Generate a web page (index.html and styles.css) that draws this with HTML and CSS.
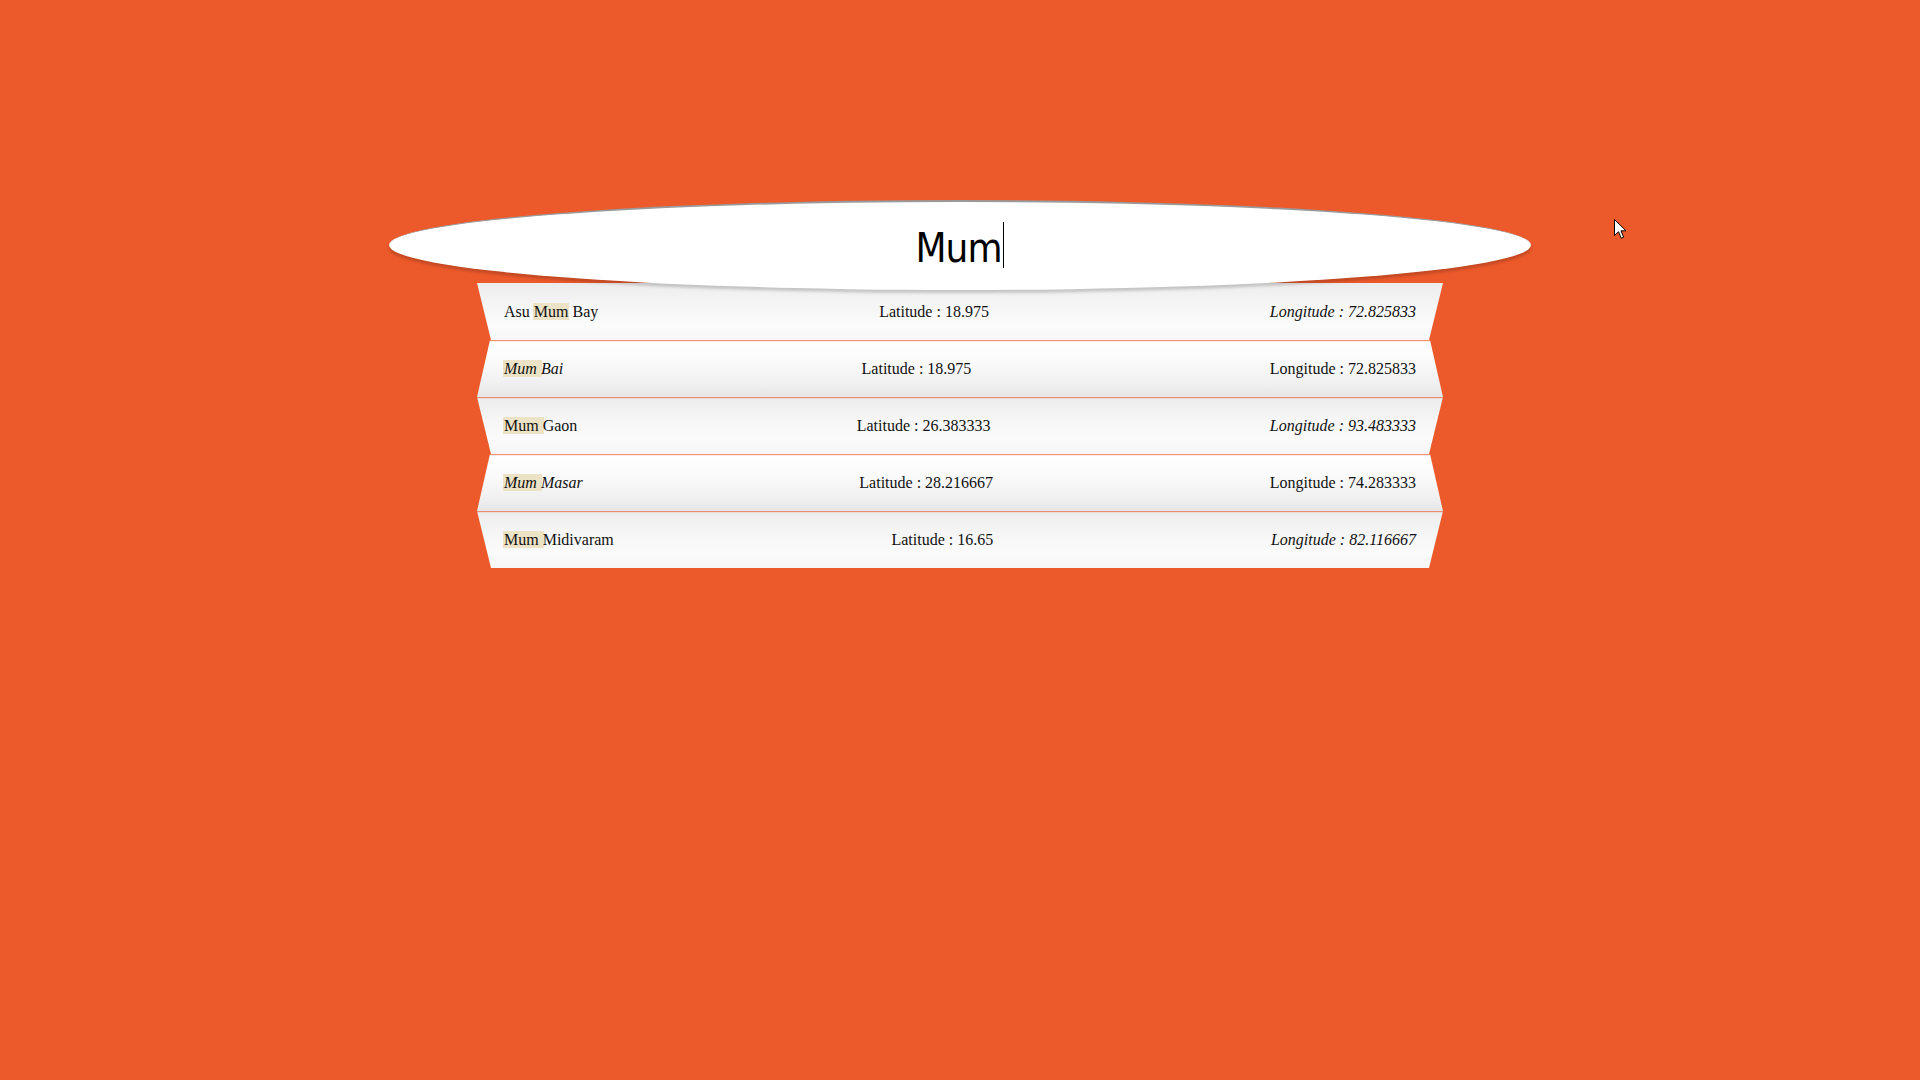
FILE: index.html
```html
<!DOCTYPE html>
<html lang="en">
<head>
<meta charset="utf-8">
<title>Place search</title>
<link rel="stylesheet" href="styles.css">
</head>
<body>
<main class="page">
  <div class="search" role="textbox" aria-label="Search places">
    <span class="search-text">Mum</span><span class="caret"></span>
  </div>
  <ul class="results">
    <li class="row row-odd">
      <span class="name">Asu <mark class="hl">Mum</mark> Bay</span>
      <span class="lat">Latitude : 18.975</span>
      <span class="lng italic">Longitude : 72.825833</span>
    </li>
    <li class="row row-even">
      <span class="name italic"><mark class="hl">Mum </mark>Bai</span>
      <span class="lat">Latitude : 18.975</span>
      <span class="lng">Longitude : 72.825833</span>
    </li>
    <li class="row row-odd">
      <span class="name"><mark class="hl">Mum </mark>Gaon</span>
      <span class="lat">Latitude : 26.383333</span>
      <span class="lng italic">Longitude : 93.483333</span>
    </li>
    <li class="row row-even">
      <span class="name italic"><mark class="hl">Mum </mark>Masar</span>
      <span class="lat">Latitude : 28.216667</span>
      <span class="lng">Longitude : 74.283333</span>
    </li>
    <li class="row row-odd">
      <span class="name"><mark class="hl">Mum </mark>Midivaram</span>
      <span class="lat">Latitude : 16.65</span>
      <span class="lng italic">Longitude : 82.116667</span>
    </li>
  </ul>
</main>
<svg class="cursor" width="13" height="21" viewBox="0 0 13 21" aria-hidden="true">
  <path d="M0.5 0.5 L0.5 16.5 L4.5 12.7 L7.2 19.2 L9.6 18.2 L7 11.8 L12 11.8 Z" fill="#fff" stroke="#000" stroke-width="1" stroke-linejoin="miter"/>
</svg>
</body>
</html>
```

FILE: styles.css
```css
html, body {
  margin: 0;
  padding: 0;
}

body {
  background: #ec592b;
  width: 1920px;
  height: 1080px;
  overflow: hidden;
  position: relative;
  font-family: "Liberation Serif", "Times New Roman", serif;
}

.page {
  padding-top: 200px;
  display: flex;
  flex-direction: column;
  align-items: center;
}

.search {
  position: relative;
  z-index: 2;
  box-sizing: border-box;
  width: 1142px;
  height: 90px;
  background: #ffffff;
  border-radius: 50%;
  border-top: 2px solid #9a9a9a;
  box-shadow: 0 3px 3px rgba(0, 0, 0, 0.18);
  display: flex;
  align-items: center;
  justify-content: center;
}

.search-text {
  font-family: "DejaVu Sans Condensed", "DejaVu Sans", sans-serif;
  font-size: 40px;
  line-height: 40px;
  letter-spacing: -1px;
  color: #000;
  margin-top: 4px;
}

.caret {
  display: block;
  width: 1px;
  height: 46px;
  background: #000;
  margin-left: 2px;
  margin-top: -2px;
}

.results {
  list-style: none;
  margin: -7px 0 0;
  padding: 0;
  width: 966px;
  display: flex;
  flex-direction: column;
  position: relative;
  z-index: 1;
}

.row {
  box-sizing: border-box;
  height: 57px;
  padding: 1px 27px 0 27px;
  display: flex;
  align-items: center;
  justify-content: space-between;
  font-size: 16px;
  color: #111;
}

.row-odd {
  background: linear-gradient(to bottom, #ececec 0%, #f5f5f5 35%, #fbfbfb 75%, #f6f6f6 100%);
  clip-path: polygon(0 0, 100% 0, calc(100% - 14px) 100%, 14px 100%);
}

.row-even {
  background: linear-gradient(to bottom, #ffffff 0%, #fafafa 40%, #efefef 80%, #e6e6e6 100%);
  clip-path: polygon(13px 0, calc(100% - 13px) 0, 100% 100%, 0 100%);
}

.results .row + .row {
  box-shadow: inset 0 1px 0 rgba(236, 89, 43, 0.6), inset 0 2px 0 rgba(236, 89, 43, 0.12);
}

.italic {
  font-style: italic;
}

.hl {
  background: #ece3c6;
  color: inherit;
  padding: 0 1px;
  margin: 0 -1px;
}

.cursor {
  position: absolute;
  left: 1614px;
  top: 219px;
}
```
